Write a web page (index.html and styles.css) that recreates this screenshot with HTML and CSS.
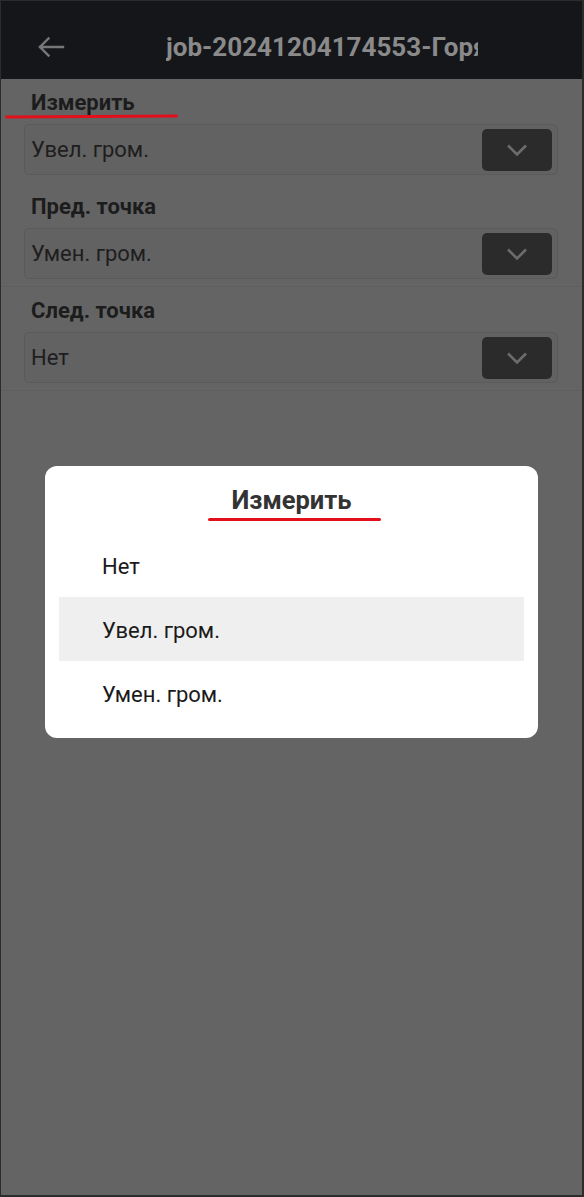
FILE: index.html
```html
<!DOCTYPE html>
<html lang="ru">
<head>
<meta charset="utf-8">
<link rel="stylesheet" href="styles.css">
</head>
<body>
<div class="screen">
  <header class="topbar">
    <svg class="back" width="28" height="22" viewBox="0 0 28 22"><path d="M26 11H3M11.5 2.5L3 11l8.5 8.5" fill="none" stroke="#777" stroke-width="2.4" stroke-linecap="square"/></svg>
    <div class="title">job-20241204174553-Горячая линия</div>
  </header>
  <main class="content">
    <section class="field first">
      <div class="label">Измерить</div>
      <span class="mark mark-label"></span>
      <div class="select"><span class="value">Увел. гром.</span><span class="btn"><svg width="22" height="12" viewBox="0 0 22 12"><path d="M2 1.5l9 9 9-9" fill="none" stroke="#6c6c6c" stroke-width="2.6"/></svg></span></div>
    </section>
    <section class="field">
      <div class="label">Пред. точка</div>
      <div class="select"><span class="value">Умен. гром.</span><span class="btn"><svg width="22" height="12" viewBox="0 0 22 12"><path d="M2 1.5l9 9 9-9" fill="none" stroke="#6c6c6c" stroke-width="2.6"/></svg></span></div>
    </section>
    <section class="field">
      <div class="label">След. точка</div>
      <div class="select"><span class="value">Нет</span><span class="btn"><svg width="22" height="12" viewBox="0 0 22 12"><path d="M2 1.5l9 9 9-9" fill="none" stroke="#6c6c6c" stroke-width="2.6"/></svg></span></div>
    </section>
  </main>
  <div class="overlay">
    <div class="dialog">
      <div class="dlg-title"><span>Измерить</span><span class="mark mark-title"></span></div>
      <ul class="options">
        <li class="opt">Нет</li>
        <li class="opt selected">Увел. гром.</li>
        <li class="opt">Умен. гром.</li>
      </ul>
    </div>
  </div>
</div>
</body>
</html>
```

FILE: styles.css
```css
* { box-sizing: border-box; }
html, body { margin: 0; padding: 0; background: #2c2c2c; }
body { font-family: Roboto, "Noto Sans", "Liberation Sans", sans-serif; }

.screen {
  position: relative;
  width: 583px;
  height: 1196px;
  border: 1px solid #2c2c2c;
  background: #646464;
  overflow: hidden;
}

.topbar {
  height: 78px;
  background: #15161a;
  display: flex;
  align-items: center;
  padding: 14px 0 0 36px;
}
.back { display: block; flex: none; }
.title {
  margin-left: 101px;
  width: 312px;
  overflow: hidden;
  white-space: nowrap;
  color: #8a8a8a;
  font-weight: 700;
  font-size: 26px;
  line-height: 30px;
}

.content { padding: 0 24px 0 23px; }
.content .field { margin: 0 -24px 0 -23px; padding: 11px 24px 7px 23px; border-bottom: 1px solid #5e5e5e; position: relative; }
.content .field.first { border-bottom-color: transparent; }
.label {
  padding-left: 7px;
  font-size: 22px;
  line-height: 26px;
  font-weight: 700;
  color: #1c1c1c;
  margin-bottom: 8px;
}
.select {
  height: 51px;
  border: 1px solid #5a5a5a;
  border-radius: 5px;
  background: #626262;
  display: flex;
  align-items: center;
  justify-content: space-between;
  padding: 0 5px 0 6px;
}
.value { font-size: 22px; color: #1e1e1e; }
.btn {
  width: 70px;
  height: 42px;
  border-radius: 5px;
  background: #2b2b2b;
  display: flex;
  align-items: center;
  justify-content: center;
}

.mark {
  position: absolute;
  height: 3px;
  border-radius: 2px;
  background: #e3101c;
}
.mark-label { left: 4px; top: 36px; width: 173px; transform: rotate(-0.4deg); }

.overlay {
  position: absolute;
  inset: 0;
  display: flex;
  justify-content: center;
  align-items: flex-start;
  padding-top: 465px;
}
.dialog {
  width: 493px;
  height: 272px;
  background: #fff;
  border-radius: 12px;
  padding: 0 14px;
}
.dlg-title {
  position: relative;
  height: 67px;
  text-align: center;
  font-size: 25.5px;
  font-weight: 700;
  color: #333;
  padding-top: 20px;
  line-height: 28px;
}
.mark-title { left: 149px; top: 52px; width: 173px; }
.options { list-style: none; margin: 0; padding: 0; }
.opt {
  height: 64px;
  display: flex;
  align-items: center;
  padding-left: 43px;
  padding-top: 2px;
  font-size: 22px;
  color: #1a1a1a;
}
.opt.selected { background: #efefef; }
```
